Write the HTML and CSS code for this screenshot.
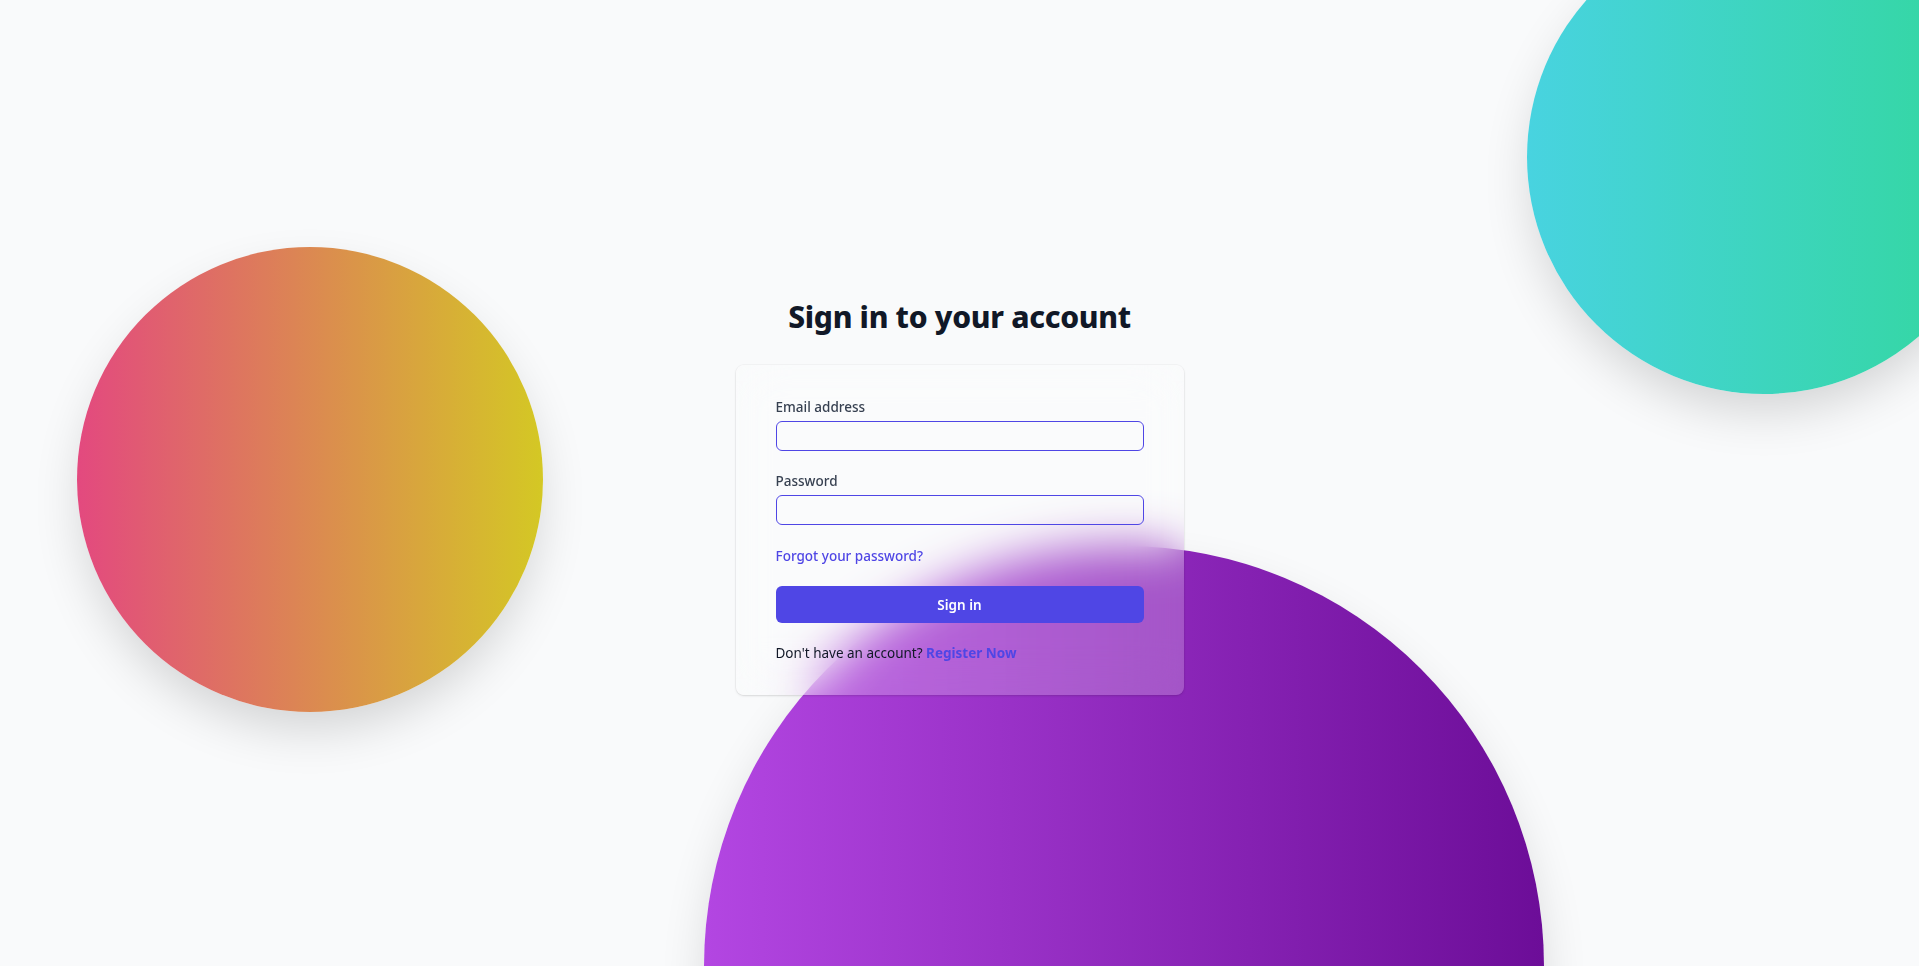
FILE: index.html
```html
<!DOCTYPE html>
<html lang="en">
<head>
<meta charset="utf-8">
<title>Sign in</title>
<link rel="stylesheet" href="styles.css">
</head>
<body>
<div class="page">
  <div class="blob blob-pink"></div>
  <div class="blob blob-teal"></div>
  <div class="blob blob-purple"></div>
  <main class="auth">
    <h2 class="title">Sign in to your account</h2>
    <div class="card">
      <form class="form">
        <div class="field">
          <label class="label" for="email">Email address</label>
          <input class="input" id="email" type="email">
        </div>
        <div class="field">
          <label class="label" for="password">Password</label>
          <input class="input" id="password" type="password">
        </div>
        <div class="row"><a class="link" href="#">Forgot your password?</a></div>
        <button class="btn" type="button">Sign in</button>
        <p class="note">Don't have an account? <a class="link strong" href="#">Register Now</a></p>
      </form>
    </div>
  </main>
</div>
</body>
</html>
```

FILE: styles.css
```css
* { box-sizing: border-box; }
html, body { margin: 0; padding: 0; }
body {
  background: #f9fafb;
  font-family: "Noto Sans", "Open Sans", sans-serif;
  color: #111827;
}
.page {
  position: relative;
  height: 100vh;
  overflow: hidden;
}
.blob {
  position: absolute;
  border-radius: 50%;
  box-shadow: 0 22px 50px -6px rgba(0, 0, 0, 0.16);
}
.blob-pink {
  left: 77px;
  top: 247px;
  width: 466px;
  height: 465px;
  background: linear-gradient(to right, #e3497f, #d4c824);
}
.blob-teal {
  left: 1527px;
  top: -80px;
  width: 474px;
  height: 474px;
  background: linear-gradient(to right, #48d3e0, #32d79c);
}
.blob-purple {
  left: 704px;
  top: 546px;
  width: 840px;
  height: 840px;
  background: linear-gradient(to right, #b346e2, #6c0d98);
}
.auth {
  position: relative;
  z-index: 1;
  display: flex;
  flex-direction: column;
  align-items: center;
  padding-top: 299px;
}
.title {
  margin: 0 0 30px;
  font-size: 30px;
  line-height: 36px;
  font-weight: 800;
  color: #111827;
  letter-spacing: -0.01em;
}
.card {
  width: 448px;
  padding: 32px 40px;
  border-radius: 8px;
  background: rgba(255, 255, 255, 0.22);
  -webkit-backdrop-filter: blur(24px);
  backdrop-filter: blur(24px);
  box-shadow: 0 0 0 1px rgba(17, 24, 39, 0.03), 0 1px 3px rgba(0, 0, 0, 0.08), 0 1px 2px rgba(0, 0, 0, 0.05);
}
.form {
  display: flex;
  flex-direction: column;
  gap: 20px;
}
.field {
  display: flex;
  flex-direction: column;
  gap: 4px;
}
.label {
  font-size: 13.5px;
  line-height: 20px;
  font-weight: 500;
  color: #374151;
}
.input {
  height: 30px;
  width: 100%;
  border: 1px solid #4f46e5;
  border-radius: 6px;
  background: transparent;
  padding: 0 10px;
  font: inherit;
  outline: none;
}
.row { line-height: 20px; }
.link {
  font-size: 13.5px;
  line-height: 20px;
  font-weight: 500;
  color: #4f46e5;
  text-decoration: none;
}
.link.strong { font-weight: 700; }
.btn {
  height: 37px;
  width: 100%;
  border: none;
  border-radius: 6px;
  background: #4f46e5;
  color: #ffffff;
  font-family: inherit;
  font-size: 13.5px;
  font-weight: 600;
  cursor: pointer;
}
.note {
  margin: 0;
  font-size: 13.5px;
  line-height: 20px;
  color: #111827;
}
```
